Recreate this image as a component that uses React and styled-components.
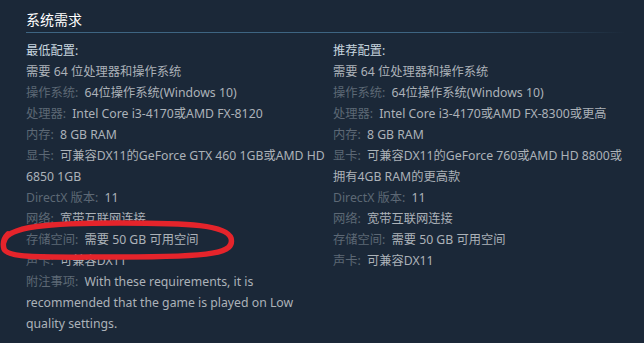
import React from 'react';
import styled, { createGlobalStyle } from 'styled-components';

const minimum = [
  { value: '需要 64 位处理器和操作系统' },
  { label: '操作系统', value: '64位操作系统(Windows 10)' },
  { label: '处理器', value: 'Intel Core i3-4170或AMD FX-8120' },
  { label: '内存', value: '8 GB RAM' },
  { label: '显卡', value: '可兼容DX11的GeForce GTX 460 1GB或AMD HD 6850 1GB' },
  { label: 'DirectX 版本', value: '11' },
  { label: '网络', value: '宽带互联网连接' },
  { label: '存储空间', value: '需要 50 GB 可用空间' },
  { label: '声卡', value: '可兼容DX11' },
  { label: '附注事项', value: 'With these requirements, it is recommended that the game is played on Low quality settings.' },
];

const recommended = [
  { value: '需要 64 位处理器和操作系统' },
  { label: '操作系统', value: '64位操作系统(Windows 10)' },
  { label: '处理器', value: 'Intel Core i3-4170或AMD FX-8300或更高' },
  { label: '内存', value: '8 GB RAM' },
  { label: '显卡', value: '可兼容DX11的GeForce 760或AMD HD 8800或拥有4GB RAM的更高款' },
  { label: 'DirectX 版本', value: '11' },
  { label: '网络', value: '宽带互联网连接' },
  { label: '存储空间', value: '需要 50 GB 可用空间' },
  { label: '声卡', value: '可兼容DX11' },
];

export default function App() {
  return (
    <>
      <GlobalStyle />
      <Page>
        <Title>系统需求</Title>
        <Columns>
          <ReqColumn title="最低配置:" items={minimum} />
          <ReqColumn title="推荐配置:" items={recommended} />
        </Columns>
        <Scribble viewBox="0 0 240 64" width="240" height="64">
          <path
            d="M 4 34 C 6 18, 50 15, 120 15 C 190 15, 226 17, 231 30 C 235 45, 214 49, 120 49 C 50 49, 8 51, 4 41 C 2 34, 4 30, 8 26"
            fill="none"
            stroke="#e5242b"
            strokeWidth="5.5"
            strokeLinecap="round"
          />
        </Scribble>
      </Page>
    </>
  );
}

const ReqColumn = ({ title, items }) => (
  <Column>
    <Heading>{title}</Heading>
    <List>
      {items.map((item, i) => (
        <Item key={i}>
          {item.label && <Label>{item.label}: </Label>}
          {item.value}
        </Item>
      ))}
    </List>
  </Column>
);

const GlobalStyle = createGlobalStyle`
  html, body {
    margin: 0;
    padding: 0;
    background: #1b2838;
  }
`;

const Page = styled.div`
  position: relative;
  width: 644px;
  height: 343px;
  box-sizing: border-box;
  padding: 10px 0 0 26px;
  overflow: hidden;
  background: #1b2838;
  font-family: "Noto Sans", "Noto Sans CJK SC", sans-serif;
`;

const Title = styled.h2`
  margin: 0;
  padding-bottom: 4px;
  font-size: 14px;
  line-height: 19px;
  font-weight: normal;
  color: #ffffff;
  background-image: linear-gradient(to right, #3e6582 0%, #3e6582 70%, rgba(62, 101, 130, 0) 97%);
  background-size: 100% 1px;
  background-repeat: no-repeat;
  background-position: bottom left;
`;

const Columns = styled.div`
  display: grid;
  grid-template-columns: 299px 300px;
  column-gap: 8px;
  margin-top: 7px;
`;

const Column = styled.div`
  font-size: 12.25px;
  line-height: 21px;
  color: #acb2b8;
`;

const Heading = styled.div`
  color: #c6d4df;
`;

const List = styled.ul`
  list-style: none;
  margin: 0;
  padding: 0;
`;

const Item = styled.li`
  margin: 0;
`;

const Label = styled.span`
  color: #5d6875;
  margin-right: 3px;
`;

const Scribble = styled.svg`
  position: absolute;
  left: 0;
  top: 208px;
  pointer-events: none;
`;
